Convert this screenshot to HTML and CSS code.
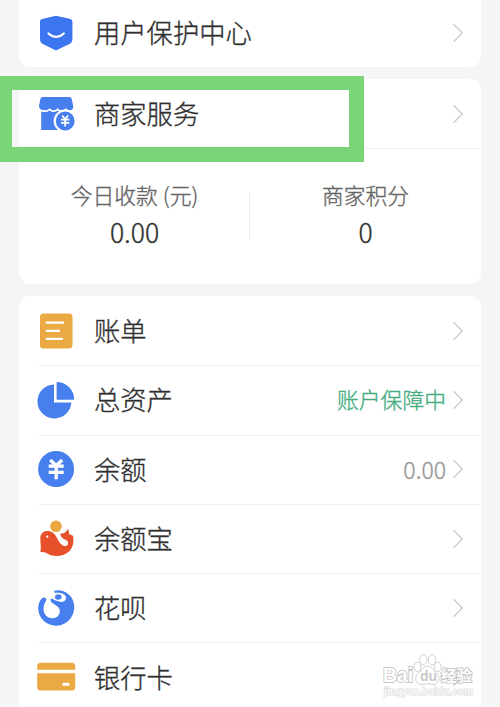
FILE: index.html
```html
<!DOCTYPE html>
<html lang="zh-CN">
<head>
<meta charset="utf-8">
<title>我的</title>
<link rel="stylesheet" href="styles.css">
</head>
<body>
<svg width="0" height="0" class="defs"><symbol id="chevron" viewBox="0 0 12 20"><path d="M1.5 1.2 10.3 10 1.5 18.8" fill="none" stroke="#cdcdcd" stroke-width="1.4"/></symbol></svg>
<main class="page">
  <section class="card card-top">
    <div class="row">
      <svg class="icon" viewBox="0 0 40 40"><path d="M20 2.8 34.5 6Q36.4 6.5 36.4 8.5V26Q36.4 29.5 33.5 31L22 36.6Q20 37.7 18 36.6L6.8 31Q4 29.5 4 26V8.5Q4 6.5 5.9 6Z" fill="#3b76f0"/><path d="M12.5 20.5Q20 27.3 27.8 20.5" fill="none" stroke="#fff" stroke-width="2.2" stroke-linecap="round"/></svg>
      <span class="label">用户保护中心</span>
      <svg class="chevron"><use href="#chevron"/></svg>
    </div>
  </section>

  <section class="card card-merchant">
    <div class="row merchant">
      <svg class="icon" viewBox="0 0 40 40"><path d="M6.5 3H33.5Q35.2 3 35.6 4.5L37.2 12Q37.5 16.3 33.7 16.3Q31.7 16.3 30 14.3Q28 16.5 25.5 16.3Q23.5 16.3 21.7 14.3Q20 16.5 17.5 16.3Q15.5 16.3 13.8 14.3Q12 16.3 9.5 16.3Q3 16.3 3 12L4.5 4.5Q5 3 6.5 3Z" fill="#4780ee"/><path d="M5.2 17.5Q10 19 13.8 16.5 17.5 19.5 21.7 16.5 27 19.5 31 16.5L34.8 18V36H5.2Z" fill="#4780ee"/><circle cx="29" cy="27" r="11.4" fill="#fff"/><circle cx="29.2" cy="27" r="9.4" fill="#4780ee"/><path d="m26.2 21.5 3 3.5 3-3.5M25 25.7h8.4M25 28.8h8.4M29.2 25v7.5" fill="none" stroke="#fff" stroke-width="1.8"/></svg>
      <span class="label">商家服务</span>
      <svg class="chevron"><use href="#chevron"/></svg>
      <div class="highlight"></div>
    </div>
    <div class="stats">
      <div class="stat"><span class="stat-name">今日收款<span class="unit">(元)</span></span><span class="stat-value">0.00</span></div>
      <div class="stat"><span class="stat-name">商家积分</span><span class="stat-value">0</span></div>
    </div>
  </section>

  <section class="card list">
    <div class="row">
      <svg class="icon" viewBox="0 0 40 40"><rect x="4" y="2.6" width="32.5" height="34.8" rx="3.5" fill="#eaa943"/><path d="M9.8 11.7H28M9.8 19.8H24M9.8 27.8H27" stroke="#fff" stroke-width="2.3"/></svg>
      <span class="label">账单</span>
      <svg class="chevron"><use href="#chevron"/></svg>
    </div>
    <div class="row">
      <svg class="icon" viewBox="0 0 40 40"><path d="M18 4.4V22.6H35.4A17 17 0 1 1 18 4.4Z" fill="#4780ee"/><path d="M20.6 1.9A17.6 17.6 0 0 1 38.2 19.8H20.6Z" fill="#4780ee"/></svg>
      <span class="label">总资产</span>
      <span class="note safe">账户保障中</span>
      <svg class="chevron"><use href="#chevron"/></svg>
    </div>
    <div class="row">
      <svg class="icon" viewBox="0 0 40 40"><circle cx="20.1" cy="20" r="18" fill="#4780ee"/><path d="m14.2 11 6 5.5 6-5.5M12.7 17.2h15M12.7 23.4h15M20.2 16v14.3" fill="none" stroke="#fff" stroke-width="3.3"/></svg>
      <span class="label">余额</span>
      <span class="note amount">0.00</span>
      <svg class="chevron"><use href="#chevron"/></svg>
    </div>
    <div class="row">
      <svg class="icon" viewBox="0 0 40 40"><path d="M4.3 19.5C4.3 14.5 7.5 12 11.5 12C16 12 18.5 14.5 20.5 18C23 23.5 26.5 27.8 30 27C33 26 32.6 22.2 30 21C27.5 20 24.5 18.5 24.4 14.3C27 15 29.3 14.3 31 11L32.3 10.3 33.3 15.3 37 16.8C38.3 23 36.8 28.3 33.5 32C27 38.3 16.5 38.5 9.5 33.4L4.3 32.8C5.6 28.2 4.3 24.5 4.3 19.5Z" fill="#e6502a"/><circle cx="20" cy="7.3" r="5.8" fill="#eaa943"/><circle cx="11.3" cy="17.7" r="1.1" fill="#fff"/></svg>
      <span class="label">余额宝</span>
      <svg class="chevron"><use href="#chevron"/></svg>
    </div>
    <div class="row">
      <svg class="icon" viewBox="0 0 40 40"><path d="M18.5 2.7Q26 .9 32.5 6.2C38.5 11 39.8 20 36.5 27C32.5 36 22 40.4 12.5 36C3 31.5-.3 20.5 4.2 12.4Q6.2 8.8 9 9.7C11.2 10.5 10 13 9 14.5C6.3 20 7 28 14.5 30C20.5 31.5 25 26.3 23.5 21.3C22.5 18 19 17 16 14.7C13.3 12.2 14.5 9.8 16.8 11.1C22 14.3 28 15.3 29.8 11.2C31 7.3 26.5 4.3 19.5 4.9Q17.5 4.5 18.5 2.7Z" fill="#4780ee"/><ellipse cx="22.3" cy="9" rx="3.3" ry="2.8" fill="#4780ee"/></svg>
      <span class="label">花呗</span>
      <svg class="chevron"><use href="#chevron"/></svg>
    </div>
    <div class="row">
      <svg class="icon" viewBox="0 0 40 40"><path d="M1.2 12.7V9.2Q1.2 5.7 4.7 5.7H35.7Q39.2 5.7 39.2 9.2V12.7Z" fill="#eaa943"/><path d="M1.2 16.3H39.2V30Q39.2 33.5 35.7 33.5H4.7Q1.2 33.5 1.2 30Z" fill="#eaa943"/><rect x="26.6" y="25.8" width="6.8" height="3" fill="#fff"/></svg>
      <span class="label">银行卡</span>
      <svg class="chevron"><use href="#chevron"/></svg>
    </div>
  </section>

  <svg class="watermark" viewBox="0 0 96 48">
    <g class="wm-name"><text x="2" y="30" textLength="30" lengthAdjust="spacingAndGlyphs">Bai</text>
    <text class="wm-cn" x="60" y="29" textLength="31" lengthAdjust="spacingAndGlyphs">经验</text></g>
    <g fill="#fff" stroke="#d0d0d0"><ellipse cx="36.5" cy="15" rx="3.5" ry="4.7"/><ellipse cx="42.3" cy="7.7" rx="3.7" ry="5"/><ellipse cx="51" cy="7.7" rx="3.7" ry="5"/><ellipse cx="56.8" cy="15" rx="3.5" ry="4.7"/><path d="M46.5 14C51 14 52 18.5 56 21.5C60 25 57.5 33.5 52 32.5Q46.5 31 41 32.5C34.5 33 32.7 25.5 37 21.5C41 18.5 42 14 46.5 14Z"/></g>
    <text class="wm-du" x="39" y="29">du</text>
    <text class="wm-url" x="3" y="42.5" textLength="89" lengthAdjust="spacingAndGlyphs">jingyan.baidu.com</text>
  </svg>
</main>
</body>
</html>
```
FILE: styles.css
```css
* { box-sizing: border-box; }

body {
  margin: 0;
  background: #f5f5f5;
  color: #303030;
  font-family: "Noto Sans CJK SC", sans-serif;
  font-weight: 300;
}

.defs { position: absolute; }

.page {
  position: relative;
  height: 707px;
  padding: 0 19px;
  overflow: hidden;
  display: flex;
  flex-direction: column;
}

.card {
  flex: none;
  background: #fff;
  border-radius: 11px;
  -webkit-text-stroke: 0.35px currentColor;
}

.card-top { height: 66.5px; border-radius: 0 0 11px 11px; margin-bottom: 12.5px; }
.card-merchant { height: 205px; margin-bottom: 12px; }
.list { height: 440px; }

.row {
  position: relative;
  height: 69.3px;
  padding: 0 17px 0 17px;
  display: flex;
  align-items: center;
}

.card-top .row { height: 65px; }

.list .row + .row::before {
  content: "";
  position: absolute;
  top: 0;
  left: 20px;
  right: 0;
  height: 1px;
  background: #eee;
}

.icon { width: 40px; height: 40px; flex: none; }

.label {
  flex: 1;
  margin: 0 0 1px 18px;
  font-size: 26.3px;
  line-height: 40px;
  white-space: nowrap;
}

.chevron { width: 12px; height: 20px; flex: none; }

.note {
  margin: 0 6px 1px 0;
  font-size: 21.8px;
  line-height: 32px;
  color: #999;
}

.note.safe { color: #45ad80; }
.note.amount { font-size: 23px; }

.merchant { height: 70px; border-bottom: 1px solid #f0f0f0; }

.highlight {
  position: absolute;
  left: -19px;
  top: -3px;
  width: 364px;
  height: 86px;
  border: solid #79d577;
  border-width: 14px 15px 15px 12px;
}

.stats { display: flex; padding-top: 29px; }

.stat {
  position: relative;
  flex: 1;
  display: flex;
  flex-direction: column;
  align-items: center;
}

.stat + .stat::before {
  content: "";
  position: absolute;
  left: -1px;
  top: 14px;
  width: 1px;
  height: 48px;
  background: #eee;
}

.stat-name { font-size: 21.8px; line-height: 34px; color: #666; }
.unit { margin-left: 5px; }
.stat-value { font-size: 26.5px; line-height: 40px; }

.watermark {
  position: absolute;
  left: 381px;
  top: 652px;
  width: 96px;
  height: 48px;
  font-family: "Liberation Sans", "Noto Sans CJK SC", sans-serif;
  font-weight: bold;
  overflow: visible;
}

.wm-name { font-size: 21px; fill: #fff; stroke: #c6c6c6; stroke-width: 1.8px; paint-order: stroke; }
.wm-cn { font-size: 15px; }
.wm-du { font-size: 14px; fill: #c9c9c9; }
.wm-url { font-size: 10px; fill: #fafafa; stroke: #d6d6d6; stroke-width: 1px; paint-order: stroke; }
```
